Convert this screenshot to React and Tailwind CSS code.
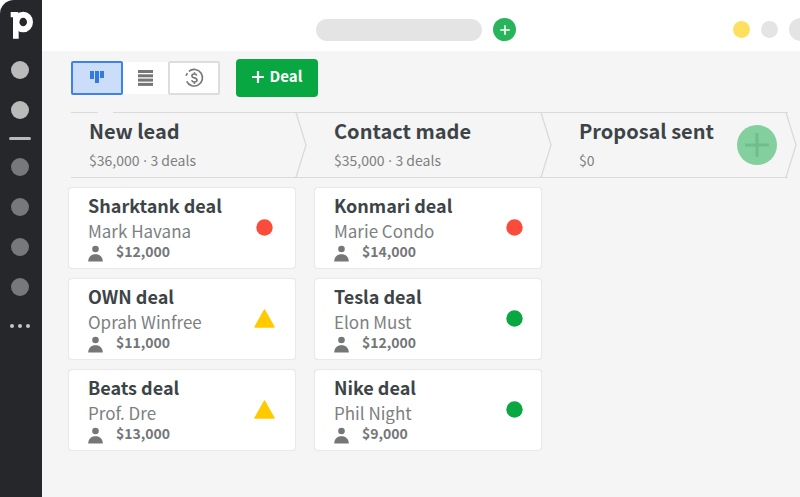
import React from "react";

const stages = [
  {
    title: "New lead",
    value: "$36,000",
    count: "3 deals",
    inset: "pr-5",
    deals: [
      { title: "Sharktank deal", person: "Mark Havana", amount: "$12,000", status: "overdue" },
      { title: "OWN deal", person: "Oprah Winfree", amount: "$11,000", status: "warning" },
      { title: "Beats deal", person: "Prof. Dre", amount: "$13,000", status: "warning" },
    ],
  },
  {
    title: "Contact made",
    value: "$35,000",
    count: "3 deals",
    inset: "pr-4",
    deals: [
      { title: "Konmari deal", person: "Marie Condo", amount: "$14,000", status: "overdue" },
      { title: "Tesla deal", person: "Elon Must", amount: "$12,000", status: "planned" },
      { title: "Nike deal", person: "Phil Night", amount: "$9,000", status: "planned" },
    ],
  },
  { title: "Proposal sent", value: "$0", count: "", inset: "", deals: [] },
];

function Logo() {
  return (
    <svg viewBox="0 0 24 28" className="h-7 w-6" role="img" aria-label="Home">
      <path d="M.7 1h6.500c.8 0 1.300.5 1.300 1.300L8.700 27.700H3V6.200H.7z" fill="#fff" />
      <ellipse cx="13.200" cy="11" rx="6.800" ry="7.300" fill="none" stroke="#fff" strokeWidth="6" />
    </svg>
  );
}

function Sidebar() {
  return (
    <nav
      aria-label="Main"
      className="flex w-[42px] shrink-0 flex-col items-center rounded-tl-[14px] bg-[#26272b] pt-[11px] pr-[2px]"
    >
      <a href="#home" className="ml-1">
        <Logo />
      </a>
      <div className="mt-[22px] flex flex-col gap-[22px]">
        {["Leads", "Deals"].map((name) => (
          <button key={name} aria-label={name} className="size-[18px] rounded-full bg-[#bababa]" />
        ))}
      </div>
      <hr className="mt-[18px] h-[3px] w-[22px] rounded-full border-0 bg-[#bababa]" />
      <div className="mt-[18px] flex flex-col gap-[22px]">
        {["Mail", "Calendar", "Contacts", "Insights"].map((name) => (
          <button key={name} aria-label={name} className="size-[18px] rounded-full bg-[#77787a]" />
        ))}
      </div>
      <button aria-label="More" className="mt-7 flex gap-1">
        <span className="size-1 rounded-full bg-[#c4c4c4]" />
        <span className="size-1 rounded-full bg-[#c4c4c4]" />
        <span className="size-1 rounded-full bg-[#c4c4c4]" />
      </button>
    </nav>
  );
}

function TopBar() {
  return (
    <header className="grid h-[51px] grid-cols-[1fr_auto_1fr] items-center overflow-hidden bg-white pt-2 pr-[10px]">
      <span />
      <div className="flex items-center gap-[11px]">
        <input
          type="search"
          aria-label="Search"
          className="h-[22px] w-[166px] rounded-full bg-[#e4e4e4] px-3 text-xs outline-none"
        />
        <button aria-label="Quick add" className="grid size-[23px] place-items-center rounded-full bg-[#28b45a]">
          <svg viewBox="0 0 10 10" className="size-[10px]" stroke="#fff" strokeWidth="1.6" strokeLinecap="round">
            <path d="M5 .8v8.4M.8 5h8.4" />
          </svg>
        </button>
      </div>
      <div className="-mr-[22px] flex items-center justify-end gap-[11px]">
        <button aria-label="Tips" className="size-[17px] shrink-0 rounded-full bg-[#ffdf60]" />
        <button aria-label="Help" className="size-[17px] shrink-0 rounded-full bg-[#e4e4e4]" />
        <button aria-label="Account" className="size-[23px] shrink-0 rounded-full bg-[#e4e4e4]" />
      </div>
    </header>
  );
}

function Toolbar() {
  return (
    <div className="ml-[3px] flex items-center">
      <button
        aria-label="Pipeline view"
        className="grid h-[34px] w-[52px] place-items-center rounded-[2px] border-2 border-[#3c82ea] bg-[#cbddf8]"
      >
        <svg viewBox="0 0 14 14" className="size-[14px]" fill="#317ae2">
          <rect x="0" y="0" width="4" height="8" />
          <rect x="5" y="0" width="4" height="12" />
          <rect x="10" y="0" width="4" height="7" />
        </svg>
      </button>
      <button aria-label="List view" className="grid h-8 w-[45px] place-items-center bg-white">
        <svg viewBox="0 0 16 16" className="size-4" fill="#747678">
          <rect y="0" width="15" height="3" />
          <rect y="4.3" width="15" height="3" />
          <rect y="8.6" width="15" height="3" />
          <rect y="12.9" width="15" height="3" />
        </svg>
      </button>
      <button
        aria-label="Forecast view"
        className="grid h-[34px] w-[52px] place-items-center rounded-[2px] border-2 border-[#dcdedd] bg-white"
      >
        <svg viewBox="0 0 20 20" className="size-5" fill="none" stroke="#747678" strokeWidth="1.6">
          <path d="M4.900 3.300A8.300 8.300 0 1 1 2.700 13.300" />
          <path d="M3.400 5.100A8.300 8.300 0 0 0 2.200 7.900" />
          <path d="M12.800 7.500c-.3-1-1.200-1.500-2.400-1.500-1.400 0-2.500.7-2.500 1.900 0 2.600 5.100 1.300 5.100 4.100 0 1.300-1.100 2-2.600 2-1.400 0-2.400-.6-2.700-1.800M10.400 4.200V6M10.400 14v1.900" />
        </svg>
      </button>
      <button className="ml-4 flex h-[38px] w-[82px] items-center justify-center gap-[6px] rounded bg-[#08a742] pb-1 text-[15px] leading-5 font-bold text-white">
        <svg viewBox="0 0 12 12" className="mt-[2px] size-3" stroke="#fff" strokeWidth="2.2">
          <path d="M6 0v12M0 6h12" />
        </svg>
        Deal
      </button>
    </div>
  );
}

function StageHeaders() {
  return (
    <div className="relative mt-[15px] ml-[3px] grid grid-cols-3 gap-[18px] border-y border-[#d8dbda]">
      <span className="absolute -top-px left-[27px] h-px w-[15px] bg-[#f5f5f5]" />
      {stages.map((stage, i) => (
        <div key={stage.title} className="relative flex h-16 items-center justify-between pl-[18px]">
          <div className="pb-px whitespace-nowrap">
            <h2 className="text-[20px] leading-7 font-bold text-[#3d4447]">{stage.title}</h2>
            <p className="mt-[3px] text-[14px] leading-6 text-[#7d7f80]">
              {stage.value}
              {stage.count && (
                <>
                  <span className="font-['Open_Sans',sans-serif] leading-none"> · </span>
                  {stage.count}
                </>
              )}
            </p>
          </div>
          {i === stages.length - 1 && (
            <button
              aria-label="Add stage"
              className="mr-[11px] grid size-10 shrink-0 place-items-center rounded-full bg-[#83d09e]"
            >
              <svg viewBox="0 0 24 24" className="size-6" stroke="#6fbe8b" strokeWidth="3">
                <path d="M12 0v24M0 12h24" />
              </svg>
            </button>
          )}
          <svg
            viewBox="0 0 12 66"
            className="absolute -top-px -right-[9px] h-[66px] w-3"
            fill="none"
            stroke="#d8dbda"
            strokeWidth="1.3"
            strokeLinejoin="round"
          >
            <path d="M0 .5h1L11 33 1 65.500H0" />
          </svg>
        </div>
      ))}
    </div>
  );
}

function Status({ kind }) {
  if (kind === "warning") {
    return (
      <svg viewBox="0 0 21 19" className="h-[19px] w-[21px] shrink-0" role="img" aria-label="No activity">
        <path d="M10.500 1 20 18H1z" fill="#ffcb00" stroke="#ffcb00" strokeWidth="1.500" strokeLinejoin="round" />
      </svg>
    );
  }
  return (
    <svg viewBox="0 0 21 19" className="h-[19px] w-[21px] shrink-0" role="img" aria-label={kind}>
      <circle cx="10.500" cy="9.500" r="8.200" fill={kind === "overdue" ? "#fb4b3a" : "#08a742"} />
    </svg>
  );
}

function DealCard({ deal, inset }) {
  return (
    <article
      className={`flex items-center justify-between rounded-[4px] border border-[#e9e9e9] bg-white pt-1 pb-[6px] pl-[19px] shadow-[0_0_1px_#e4e4e4] ${inset}`}
    >
      <div className="whitespace-nowrap">
        <h3 className="text-[18px] leading-[26px] font-bold text-[#3d4447]">{deal.title}</h3>
        <p className="text-[17px] leading-[26px] text-[#7d7f80]">{deal.person}</p>
        <div className="flex h-[18px] items-end gap-[13px]">
          <svg viewBox="0 0 15 17" className="h-[17px] w-[15px]" fill="#747678">
            <circle cx="7.500" cy="4" r="3.300" />
            <path d="M.2 16.500c0-4.600 3-7.300 7.300-7.300s7.300 2.700 7.300 7.300z" />
          </svg>
          <p className="pb-[3px] text-[14px] leading-4 font-bold text-[#747678]">{deal.amount}</p>
        </div>
      </div>
      <Status kind={deal.status} />
    </article>
  );
}

export default function App() {
  return (
    <div className="flex min-h-screen overflow-hidden bg-white font-['Noto_Sans_CJK_SC','Source_Sans_Pro',sans-serif]">
      <Sidebar />
      <div className="flex min-w-0 flex-1 flex-col">
        <TopBar />
        <main className="flex-1 bg-[#f5f5f5] pt-2 pr-3 pb-6 pl-[26px]">
          <Toolbar />
          <StageHeaders />
          <div className="mt-[9px] grid grid-cols-3 gap-[18px]">
            {stages.map((stage) => (
              <section key={stage.title} aria-label={stage.title} className="flex flex-col gap-[9px]">
                {stage.deals.map((deal) => (
                  <DealCard key={deal.title} deal={deal} inset={stage.inset} />
                ))}
              </section>
            ))}
          </div>
        </main>
      </div>
    </div>
  );
}
